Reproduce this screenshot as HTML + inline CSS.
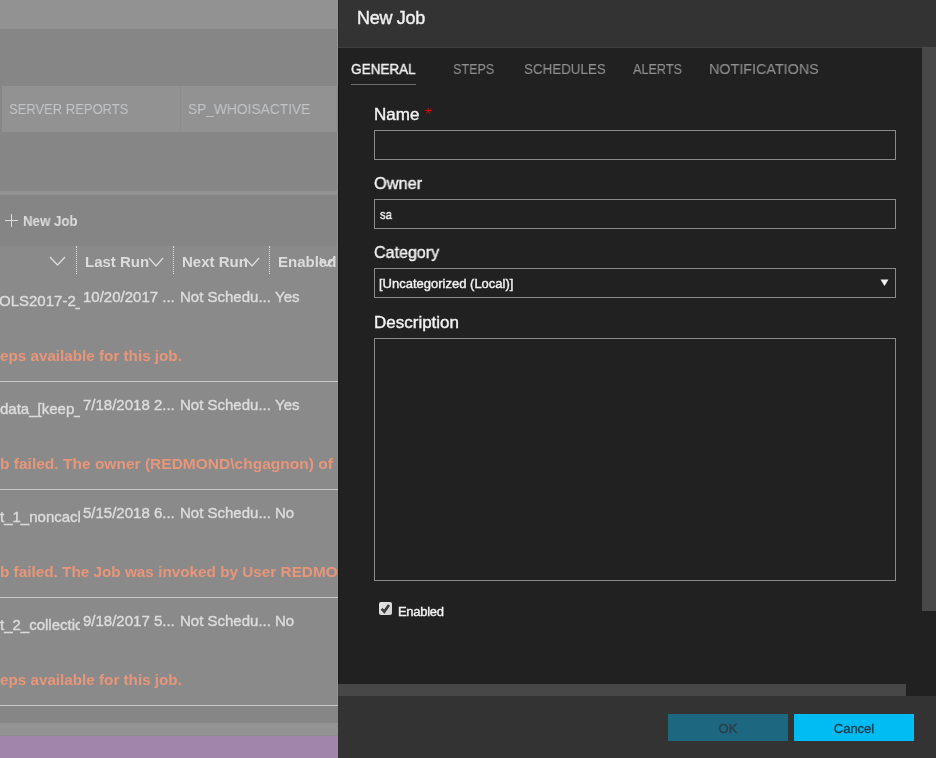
<!DOCTYPE html>
<html><head><meta charset="utf-8">
<style>
*{margin:0;padding:0;box-sizing:border-box}
html,body{width:936px;height:758px;overflow:hidden;background:#868686;font-family:"Liberation Sans",sans-serif}
.abs{position:absolute}
#left{position:absolute;left:0;top:0;width:338px;height:758px;background:#868686;overflow:hidden}
.t{transform-origin:0 0;position:absolute;white-space:nowrap;will-change:transform;-webkit-text-stroke:0.4px currentColor}
#dlg{position:absolute;left:338px;top:0;width:598px;height:758px;background:#212121}
</style></head><body>
<div id="left">
  <div class="abs" style="left:0;top:0;width:338px;height:29px;background:#929292"></div>
  <div class="abs" style="left:2px;top:86px;width:178px;height:46px;background:#929292"></div>
  <div class="abs" style="left:180px;top:86px;width:1px;height:46px;background:#8c8c8c"></div>
  <div class="abs" style="left:181px;top:86px;width:156px;height:46px;background:#929292"></div>
  <div class="t" style="left:9px;top:100px;font-size:15px;color:#c2c5c8;-webkit-text-stroke:0;transform:scaleX(0.866)">SERVER REPORTS</div>
  <div class="t" style="left:188px;top:100px;font-size:15px;color:#c2c5c8;-webkit-text-stroke:0;transform:scaleX(0.917)">SP_WHOISACTIVE</div>
  <div class="abs" style="left:0;top:191px;width:338px;height:4px;background:#939393"></div>
  <div class="abs" style="left:0;top:195px;width:338px;height:51px;background:#858585"></div>
  <div class="abs" style="left:0;top:246px;width:338px;height:477px;background:#8a8a8a"></div>
  <div class="abs" style="left:337px;top:29px;width:1px;height:57px;background:#929292"></div>
  <div class="abs" style="left:337px;top:132px;width:1px;height:604px;background:#929292"></div>
  <!-- plus -->
  <div class="abs" style="left:5px;top:220px;width:13px;height:1px;background:#dcdcdc"></div>
  <div class="abs" style="left:11px;top:214px;width:1px;height:13px;background:#dcdcdc"></div>
  <div class="t" style="left:23px;top:213px;font-size:14px;font-weight:bold;color:#dcdcdc;-webkit-text-stroke:0;transform:scaleX(0.947)">New Job</div>
  <!-- header -->
  <svg class="abs" style="left:49px;top:256px" width="17" height="11"><path d="M1 1 L8.5 9 L16 1" stroke="#dcdcdc" stroke-width="1.3" fill="none"/></svg>
  <div class="abs" style="left:76px;top:246px;width:0;height:28px;border-left:1px dotted #e0e0e0"></div>
  <div class="abs" style="left:173px;top:246px;width:0;height:28px;border-left:1px dotted #e0e0e0"></div>
  <div class="abs" style="left:269px;top:246px;width:0;height:28px;border-left:1px dotted #e0e0e0"></div>
  <div class="t" style="left:85px;top:253px;font-size:15px;font-weight:bold;color:#dcdcdc;-webkit-text-stroke:0">Last Run</div>
  <svg class="abs" style="left:148px;top:257px" width="16" height="11"><path d="M1 1 L8 9 L15 1" stroke="#dcdcdc" stroke-width="1.3" fill="none"/></svg>
  <div class="t" style="left:182px;top:253px;font-size:15px;font-weight:bold;color:#dcdcdc;-webkit-text-stroke:0">Next Run</div>
  <svg class="abs" style="left:244px;top:257px" width="16" height="11"><path d="M1 1 L8 9 L15 1" stroke="#dcdcdc" stroke-width="1.3" fill="none"/></svg>
  <div class="t" style="left:278px;top:253px;font-size:15px;font-weight:bold;color:#dcdcdc;-webkit-text-stroke:0">Enabled</div>
  <svg class="abs" style="left:319px;top:257px" width="16" height="11"><path d="M1 1 L8 9 L15 1" stroke="#dcdcdc" stroke-width="1.3" fill="none"/></svg>
  <div class="abs" style="left:0;top:282px;width:80px;height:30px;overflow:hidden"><div class="t" style="left:-1px;top:10px;font-size:15px;color:#dcdcdc">OLS2017-2_</div></div>
  <div class="t" style="left:83px;top:288px;font-size:15px;color:#dcdcdc">10/20/2017 ...</div>
  <div class="t" style="left:180px;top:288px;font-size:15px;color:#dcdcdc">Not Schedu...</div>
  <div class="t" style="left:275px;top:288px;font-size:15px;color:#dcdcdc">Yes</div>
  <div class="t" style="left:0;top:347px;font-size:15px;font-weight:bold;color:#e8967a;-webkit-text-stroke:0;transform:scaleX(1.015)">eps available for this job.</div>
  <div class="abs" style="left:0;top:381px;width:338px;height:1px;background:#c8c8c8"></div>
  <div class="abs" style="left:0;top:390px;width:80px;height:30px;overflow:hidden"><div class="t" style="left:0;top:10px;font-size:15px;color:#dcdcdc">data_[keep_</div></div>
  <div class="t" style="left:83px;top:396px;font-size:15px;color:#dcdcdc">7/18/2018 2...</div>
  <div class="t" style="left:180px;top:396px;font-size:15px;color:#dcdcdc">Not Schedu...</div>
  <div class="t" style="left:275px;top:396px;font-size:15px;color:#dcdcdc">Yes</div>
  <div class="t" style="left:0;top:455px;font-size:15px;font-weight:bold;color:#e8967a;-webkit-text-stroke:0;transform:scaleX(1.035)">b failed. The owner (REDMOND\chgagnon) of o</div>
  <div class="abs" style="left:0;top:489px;width:338px;height:1px;background:#c8c8c8"></div>
  <div class="abs" style="left:0;top:498px;width:80px;height:30px;overflow:hidden"><div class="t" style="left:0;top:10px;font-size:15px;color:#dcdcdc">t_1_noncach</div></div>
  <div class="t" style="left:83px;top:504px;font-size:15px;color:#dcdcdc">5/15/2018 6...</div>
  <div class="t" style="left:180px;top:504px;font-size:15px;color:#dcdcdc">Not Schedu...</div>
  <div class="t" style="left:275px;top:504px;font-size:15px;color:#dcdcdc">No</div>
  <div class="t" style="left:0;top:563px;font-size:15px;font-weight:bold;color:#e8967a;-webkit-text-stroke:0;transform:scaleX(1.02)">b failed. The Job was invoked by User REDMOND</div>
  <div class="abs" style="left:0;top:597px;width:338px;height:1px;background:#c8c8c8"></div>
  <div class="abs" style="left:0;top:606px;width:80px;height:30px;overflow:hidden"><div class="t" style="left:0;top:10px;font-size:15px;color:#dcdcdc">t_2_collectic</div></div>
  <div class="t" style="left:83px;top:612px;font-size:15px;color:#dcdcdc">9/18/2017 5...</div>
  <div class="t" style="left:180px;top:612px;font-size:15px;color:#dcdcdc">Not Schedu...</div>
  <div class="t" style="left:275px;top:612px;font-size:15px;color:#dcdcdc">No</div>
  <div class="t" style="left:0;top:671px;font-size:15px;font-weight:bold;color:#e8967a;-webkit-text-stroke:0;transform:scaleX(1.015)">eps available for this job.</div>
  <div class="abs" style="left:0;top:705px;width:338px;height:1px;background:#c8c8c8"></div>
  <div class="abs" style="left:0;top:706px;width:338px;height:17px;background:#868686"></div>
  <div class="abs" style="left:0;top:723px;width:338px;height:13px;background:#939393"></div>
  <div class="abs" style="left:0;top:735px;width:338px;height:1px;background:#8e8a90"></div>
  <div class="abs" style="left:0;top:736px;width:338px;height:22px;background:#a286aa"></div>
</div>

<div id="dlg">
  <div class="abs" style="left:0;top:0;width:598px;height:47px;background:#333333"></div>
  <div class="abs" style="left:0;top:47px;width:598px;height:1px;background:#3f3f3f"></div>
  <div class="abs" style="left:0;top:0;width:1px;height:47px;background:#2e2e2e"></div>
  <div class="abs" style="left:0;top:48px;width:1px;height:636px;background:#1a1a1a"></div>
  <div class="t" style="left:19px;top:8px;font-size:18px;letter-spacing:-0.3px;color:#f0f0f0">New Job</div>
  <!-- tabs -->
  <div class="t" style="left:13px;top:60px;font-size:15px;transform:scaleX(0.9028);color:#f0f0f0">GENERAL</div>
  <div class="abs" style="left:13px;top:84px;width:65px;height:1px;background:#6e6e6e"></div>
  <div class="t" style="left:115px;top:60px;font-size:15px;transform:scaleX(0.8367);color:#8f8f8f;-webkit-text-stroke:0.1px currentColor">STEPS</div>
  <div class="t" style="left:186px;top:60px;font-size:15px;transform:scaleX(0.8913);color:#8f8f8f;-webkit-text-stroke:0.1px currentColor">SCHEDULES</div>
  <div class="t" style="left:295px;top:60px;font-size:15px;transform:scaleX(0.8448);color:#8f8f8f;-webkit-text-stroke:0.1px currentColor">ALERTS</div>
  <div class="t" style="left:371px;top:60px;font-size:15px;transform:scaleX(0.9561);color:#8f8f8f;-webkit-text-stroke:0.1px currentColor">NOTIFICATIONS</div>
  <!-- form -->
  <div class="t" style="left:36px;top:105px;font-size:17px;color:#f2f2f2">Name <span style="color:#dd0000;font-size:17px;margin-left:1px;position:relative;top:0px;-webkit-text-stroke:0">*</span></div>
  <div class="abs" style="left:36px;top:130px;width:522px;height:30px;border:1px solid #8a8a8a"></div>
  <div class="t" style="left:36px;top:174px;font-size:17px;transform:scaleX(0.96);color:#f2f2f2">Owner</div>
  <div class="abs" style="left:36px;top:199px;width:522px;height:30px;border:1px solid #8a8a8a"></div>
  <div class="t" style="left:42px;top:207px;font-size:13px;transform:scaleX(0.87);color:#f2f2f2">sa</div>
  <div class="t" style="left:36px;top:243px;font-size:17px;transform:scaleX(0.945);color:#f2f2f2">Category</div>
  <div class="abs" style="left:36px;top:268px;width:522px;height:30px;border:1px solid #8a8a8a"></div>
  <div class="t" style="left:41px;top:276px;font-size:13px;color:#f2f2f2">[Uncategorized (Local)]</div>
  <svg class="abs" style="left:880px;top:278px;left:542px" width="9" height="9"><path d="M0.5 1.5 L8.5 1.5 L4.5 8 Z" fill="#f0f0f0"/></svg>
  <div class="t" style="left:36px;top:313px;font-size:17px;color:#f2f2f2">Description</div>
  <div class="abs" style="left:36px;top:338px;width:522px;height:243px;border:1px solid #8a8a8a"></div>
  <!-- checkbox -->
  <div class="abs" style="left:41px;top:602px;width:13px;height:13px;background:linear-gradient(135deg,#e6e6e6,#d2d2d2);border-radius:2px"></div>
  <svg class="abs" style="left:41px;top:602px" width="13" height="13"><path d="M2.6 6.8 L5.3 9.6 L10 3" stroke="#3c3c3c" stroke-width="2.6" fill="none" stroke-linejoin="miter"/></svg>
  <div class="t" style="left:60px;top:604px;font-size:13px;letter-spacing:-0.3px;color:#f2f2f2">Enabled</div>
  <!-- scrollbars -->
  <div class="abs" style="left:584px;top:47px;width:14px;height:564px;background:#484848"></div>
  <div class="abs" style="left:0;top:684px;width:568px;height:12px;background:#474747"></div>
  <!-- footer -->
  <div class="abs" style="left:0;top:696px;width:598px;height:62px;background:#333333"></div>
  <div class="abs" style="left:330px;top:714px;width:120px;height:27px;background:#1e6780"></div>
  <div class="t" style="left:330px;top:721px;width:120px;text-align:center;font-size:13px;color:#29414b">OK</div>
  <div class="abs" style="left:456px;top:714px;width:120px;height:27px;background:#00bcf2"></div>
  <div class="t" style="left:456px;top:721px;width:120px;text-align:center;font-size:13px;color:#1a3d4c">Cancel</div>
</div>
</body></html>
